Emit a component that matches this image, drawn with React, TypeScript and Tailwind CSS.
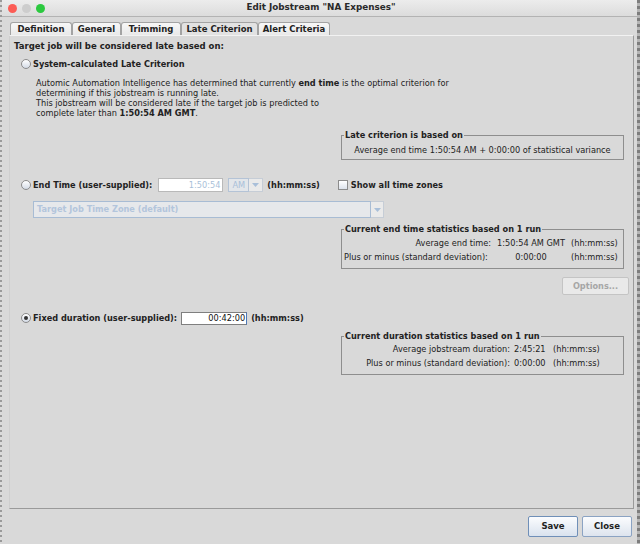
const font = "font-['DejaVu_Sans',sans-serif]";

function Radio({ checked }: { checked?: boolean }) {
  return (
    <span className="flex h-[10px] w-[10px] shrink-0 items-center justify-center rounded-full border border-[#8c8c8c] bg-gradient-to-b from-white to-[#d4dbe6]">
      {checked && <span className="h-[4px] w-[4px] rounded-full bg-[#333]" />}
    </span>
  );
}

function Tab({ label, w, active }: { label: string; w: string; active?: boolean }) {
  return (
    <div
      className={`${w} flex h-[13px] items-center justify-center rounded-t-[3px] border border-b-0 border-[#a3a3a3] text-[8.5px] font-bold text-[#222] ${
        active ? "bg-[#e2e2e2]" : "bg-gradient-to-b from-[#f7f7f7] to-[#e9e9e9]"
      }`}
    >
      {label}
    </div>
  );
}

function Legend({ children }: { children: React.ReactNode }) {
  return <legend className="ml-[2px] px-[1px] text-[8.2px] font-bold leading-[10px] text-[#222]">{children}</legend>;
}

function Arrow() {
  return (
    <svg width="7" height="4" viewBox="0 0 7 4">
      <path d="M0 0h7L3.5 4z" fill="#a9bfd9" />
    </svg>
  );
}

export default function App() {
  return (
    <div className={`${font} flex h-[544px] w-[640px] overflow-hidden bg-[#8a8a8a] text-[8.2px] text-[#222]`}>
      <div className="w-[2px] bg-[repeating-linear-gradient(180deg,#9a9a9a_0px,#9a9a9a_2px,#dadada_2px,#dadada_5px)]" />
      <div className="flex w-[635px] flex-col bg-[#d9d9d9]">
        {/* title bar */}
        <div className="flex h-[17px] items-center border-b border-[#b3b3b3] bg-gradient-to-b from-[#ececec] to-[#dcdcdc]">
          <div className="flex items-center gap-[5px] pl-[6px]">
            <span className="h-[9px] w-[9px] rounded-full bg-[#fc5c55]" />
            <span className="h-[9px] w-[9px] rounded-full bg-[#cdcdcd]" />
            <span className="h-[9px] w-[9px] rounded-full bg-[#2bc93f]" />
          </div>
          <div className="-ml-[40px] flex-1 text-center text-[8.8px] font-bold text-[#2a2a2a]">Edit Jobstream "NA Expenses"</div>
        </div>

        {/* tabs */}
        <div className="ml-[8px] mt-[5px] flex">
          <Tab label="Definition" w="w-[62px]" />
          <Tab label="General" w="w-[49px]" />
          <Tab label="Trimming" w="w-[60px]" />
          <Tab label="Late Criterion" w="w-[77px]" active />
          <Tab label="Alert Criteria" w="w-[72px]" />
        </div>

        {/* panel */}
        <div className="ml-[7px] mr-[3px] flex h-[474px] flex-col border border-t-[#f2f2f2] border-l-[#cfcfcf] border-r-[#9a9a9a] border-b-[#9a9a9a]">
          <div className="mt-[3px] ml-[4px] h-[14px] text-[8.5px] leading-[14px] font-bold">Target job will be considered late based on:</div>

          <div className="mt-[4px] ml-[11px] flex h-[14px] items-center gap-[2px]">
            <Radio />
            <span className="font-bold">System-calculated Late Criterion</span>
          </div>

          <div className="mt-[7px] ml-[26px] leading-[10px]">
            <div>
              Automic Automation Intelligence has determined that currently <b>end time</b> is the optimal criterion for
            </div>
            <div>determining if this jobstream is running late.</div>
            <div>This jobstream will be considered late if the target job is predicted to</div>
            <div>
              complete later than <b>1:50:54 AM GMT</b>.
            </div>
          </div>

          <fieldset className="mt-[12px] ml-[331px] h-[30px] w-[283px] border border-[#8e8e8e] px-0">
            <Legend>Late criterion is based on</Legend>
            <div className="mt-[4px] text-center">Average end time 1:50:54 AM + 0:00:00 of statistical variance</div>
          </fieldset>

          {/* end time */}
          <div className="mt-[18px] ml-[11px] flex h-[14px] items-center">
            <Radio />
            <span className="ml-[2px] font-bold">End Time (user-supplied):</span>
            <div className="ml-[6px] flex h-[14px] w-[65px] items-center justify-end border border-[#b9b9b9] bg-white pr-[2px] text-[#a9bfd9]">
              1:50:54
            </div>
            <div className="ml-[5px] flex h-[14px]">
              <div className="flex w-[21px] items-center justify-center border border-[#b4c3d6] bg-[#e3e6ea] text-[#a9bfd9]">AM</div>
              <div className="flex w-[14px] items-center justify-center border border-l-0 border-[#c6cdd6] bg-[#eaeaea]">
                <Arrow />
              </div>
            </div>
            <span className="ml-[4px] font-bold">(hh:mm:ss)</span>
            <span className="ml-[18px] h-[10px] w-[10px] border border-[#8c8c8c] bg-gradient-to-b from-white to-[#dde3ec]" />
            <span className="ml-[3px] font-bold">Show all time zones</span>
          </div>

          <div className="mt-[9px] ml-[23px] flex h-[17px] w-[351px]">
            <div className="flex flex-1 items-center border border-[#a8bcd4] bg-[#e6e8eb] pl-[3px] font-bold text-[#b3c5dc]">
              Target Job Time Zone (default)
            </div>
            <div className="flex w-[13px] items-center justify-center border border-l-0 border-[#c6cdd6] bg-[#eaeaea]">
              <Arrow />
            </div>
          </div>

          <fieldset className="mt-[6px] ml-[331px] h-[45px] w-[283px] border border-[#8e8e8e] px-0">
            <Legend>Current end time statistics based on 1 run</Legend>
            <div className="mt-[4px] grid grid-cols-[147px_72px_48px] gap-x-[4px] gap-y-[4px] whitespace-nowrap pl-[2px] leading-[10px]">
              <span className="text-right">Average end time:</span>
              <span className="text-center">1:50:54 AM GMT</span>
              <span>(hh:mm:ss)</span>
              <span>Plus or minus (standard deviation):</span>
              <span className="text-center">0:00:00</span>
              <span>(hh:mm:ss)</span>
            </div>
          </fieldset>

          <div className="mt-[8px] mr-[4px] flex justify-end">
            <div className="flex h-[18px] w-[67px] items-center justify-center rounded-[2px] border border-[#c4c4c4] bg-[#e9e9e9] font-bold text-[#a6a6a6]">
              Options...
            </div>
          </div>

          {/* fixed duration */}
          <div className="mt-[16px] ml-[11px] flex h-[14px] items-center">
            <Radio checked />
            <span className="ml-[2px] font-bold">Fixed duration (user-supplied):</span>
            <div className="ml-[4px] flex h-[13px] w-[66px] items-center justify-end border border-[#7f7f7f] border-r-[#4d79b8] bg-white pr-[1px] text-[#111]">
              00:42:00
            </div>
            <span className="ml-[4px] font-bold">(hh:mm:ss)</span>
          </div>

          <fieldset className="mt-[6px] ml-[331px] h-[44px] w-[283px] border border-[#8e8e8e] px-0">
            <Legend>Current duration statistics based on 1 run</Legend>
            <div className="mt-[3px] grid grid-cols-[168px_35px_46px] gap-x-[4px] gap-y-[4px] whitespace-nowrap leading-[10px]">
              <span className="text-right">Average jobstream duration:</span>
              <span>2:45:21</span>
              <span>(hh:mm:ss)</span>
              <span className="text-right">Plus or minus (standard deviation):</span>
              <span>0:00:00</span>
              <span>(hh:mm:ss)</span>
            </div>
          </fieldset>
        </div>

        {/* buttons */}
        <div className="mt-[7px] mr-[5px] flex justify-end gap-[4px]">
          <button className="flex h-[21px] w-[50px] items-center justify-center rounded-[2px] border border-[#6f8fb8] bg-gradient-to-b from-[#fbfcfe] to-[#d9e2ee] text-[8.5px] font-bold text-[#222]">
            Save
          </button>
          <button className="flex h-[21px] w-[50px] items-center justify-center rounded-[2px] border border-[#8ba3c3] bg-gradient-to-b from-[#fbfcfe] to-[#dde4ee] text-[8.5px] font-bold text-[#222]">
            Close
          </button>
        </div>
      </div>
      <div className="flex-1 bg-[repeating-linear-gradient(180deg,#7d7d7d_0px,#7d7d7d_3px,#b5b5b5_3px,#b5b5b5_6px)]" />
    </div>
  );
}
